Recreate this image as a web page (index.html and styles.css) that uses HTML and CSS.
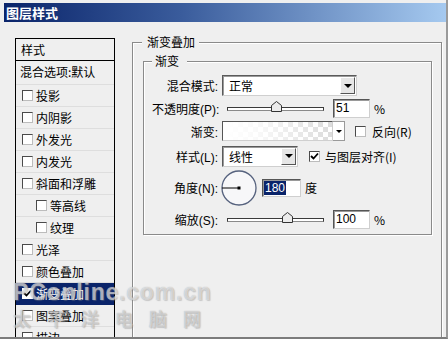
FILE: index.html
```html
<!DOCTYPE html>
<html>
<head>
<meta charset="utf-8">
<link rel="stylesheet" href="styles.css">
</head>
<body>
<div class="win">
  <div class="title">图层样式</div>
  <div class="main">
    <div class="list">
      <div class="hdr">样式</div>
      <div class="blend">混合选项:默认</div>
      <div class="item"><span class="cb"></span>投影</div>
      <div class="item"><span class="cb"></span>内阴影</div>
      <div class="item"><span class="cb"></span>外发光</div>
      <div class="item"><span class="cb"></span>内发光</div>
      <div class="item"><span class="cb"></span>斜面和浮雕</div>
      <div class="item sub"><span class="cb"></span>等高线</div>
      <div class="item sub"><span class="cb"></span>纹理</div>
      <div class="item"><span class="cb"></span>光泽</div>
      <div class="item"><span class="cb"></span>颜色叠加</div>
      <div class="item sel"><span class="cb on"><svg width="9" height="9" viewBox="0 0 9 9"><path d="M1 4 L3.5 6.5 L8 1.5" fill="none" stroke="#000" stroke-width="1.8"/></svg></span>渐变叠加</div>
      <div class="item"><span class="cb"></span>图案叠加</div>
      <div class="item"><span class="cb"></span>描边</div>
    </div>
    <fieldset class="grp outer">
      <legend class="lg-outer">渐变叠加</legend>
      <fieldset class="grp inner">
        <legend class="lg-inner">渐变</legend>
        <div class="row r1">
          <span class="lbl">混合模式:</span>
          <div class="select w-mode"><span class="val">正常</span><span class="btn"><i class="tri"></i></span></div>
        </div>
        <div class="row r2">
          <span class="lbl">不透明度(P):</span>
          <div class="slider"><div class="track"></div><svg class="thumb t51" width="11" height="11" viewBox="0 0 11 11"><polygon points="0.5,10.5 0.5,4.5 5.5,0.5 10.5,4.5 10.5,10.5" fill="#ececec" stroke="#333"/></svg></div>
          <div class="input w-num">51</div>
          <span class="unit">%</span>
        </div>
        <div class="row r3">
          <span class="lbl">渐变:</span>
          <div class="grad"></div>
          <span class="gbtn"><i class="tri small"></i></span>
          <span class="cb c-rev"></span>
          <span class="ctext">反向(R)</span>
        </div>
        <div class="row r4">
          <span class="lbl">样式(L):</span>
          <div class="select w-style"><span class="val">线性</span><span class="btn"><i class="tri"></i></span></div>
          <span class="cb c-align"><svg width="9" height="9" viewBox="0 0 9 9"><path d="M1 4 L3.5 6.5 L8 1.5" fill="none" stroke="#000" stroke-width="1.8"/></svg></span>
          <span class="ctext">与图层对齐(I)</span>
        </div>
        <div class="row r5">
          <span class="lbl">角度(N):</span>
          <svg class="dial" width="36" height="36" viewBox="0 0 36 36"><circle cx="18" cy="18" r="17" fill="#f7f7f9" stroke="#56627e" stroke-width="1.3"/><line x1="1" y1="18" x2="18" y2="18" stroke="#000" stroke-width="1"/><rect x="16.5" y="16.5" width="3" height="3" fill="#000"/></svg>
          <div class="input w-ang"><span class="hl">180</span></div>
          <span class="unit">度</span>
        </div>
        <div class="row r6">
          <span class="lbl">缩放(S):</span>
          <div class="slider"><div class="track"></div><svg class="thumb t100" width="11" height="11" viewBox="0 0 11 11"><polygon points="0.5,10.5 0.5,4.5 5.5,0.5 10.5,4.5 10.5,10.5" fill="#ececec" stroke="#333"/></svg></div>
          <div class="input w-num">100</div>
          <span class="unit">%</span>
        </div>
      </fieldset>
    </fieldset>
  </div>
  <div class="wm">
    <div class="wm1">PConline.com.cn</div>
    <div class="wm2">太平洋电脑网</div>
  </div>
</div>
</body>
</html>
```

FILE: styles.css
```css
* { box-sizing: border-box; }
html, body { margin: 0; padding: 0; background: #efefef; }
body {
  font-family: "Liberation Sans", "Noto Sans CJK SC", sans-serif;
  font-size: 12px;
  color: #000;
}
.win {
  position: relative;
  width: 448px;
  height: 339px;
  overflow: hidden;
  background: #efefef;
  padding: 3px 0 0 4px;
  border-bottom: 2px solid #7c7c7c;
  border-right: 2px solid #9a9a9a;
  border-top: 0;
}
.title {
  height: 19px;
  background: linear-gradient(to right, #0a246a 0%, #3a5c9c 40%, #a6caf0 100%);
  color: #fff;
  font-weight: bold;
  font-size: 13px;
  line-height: 19px;
  padding-left: 2px;
  margin-right: -2px;
  font-family: "Noto Sans CJK SC", sans-serif;
}
.main {
  display: flex;
  align-items: stretch;
  height: 315px;
  padding: 13px 0 0 11px;
}
.list {
  width: 100px;
  margin-top: 3px;
  border: 1px solid #000;
  border-bottom: 0;
  font-family: "Noto Sans CJK SC", sans-serif;
}
.hdr {
  height: 22px;
  line-height: 21px;
  padding-left: 5px;
  border-bottom: 1px solid #000;
}
.blend {
  height: 24px;
  border-top: 2px solid #cfcfcf;
  box-shadow: inset 0 1px 0 #000;
  border-bottom: 1px solid #dedede;
  line-height: 20px;
  padding-left: 4px;
  padding-top: 1px;
}
.hdr + .blend { border-top: 0; box-shadow: none; }
.item {
  height: 22px;
  display: flex;
  align-items: center;
  padding-left: 6px;
  border-bottom: 1px solid #dedede;
}
.item.sub { padding-left: 20px; }
.item.sel { background: #0a246a; color: #fff; border-bottom-color: #0a246a; }
.cb {
  display: inline-flex;
  align-items: center;
  justify-content: center;
  width: 11px;
  height: 11px;
  background: #fff;
  border: 1px solid #4a4a4a;
  border-right-color: #bcbcbc;
  border-bottom-color: #bcbcbc;
  margin-right: 3px;
  flex: none;
}
.cb.on { border-color: #fff; }
.grp {
  margin: 0;
  min-width: 0;
  border: 1px solid #8a8a8a;
  box-shadow: inset 1px 1px 0 #fff, 1px 1px 0 #fff;
}
.outer {
  width: 310px;
  margin-left: 17px;
  padding: 5px 9px 0 10px;
  border-bottom: 0;
}
.lg-outer {
  padding: 0 4px 0 5px;
  margin-left: -1px;
  line-height: 14px;
  font-family: "Noto Sans CJK SC", sans-serif;
  background: #efefef;
}
.inner {
  padding: 6px 0 0 8px;
}
.lg-inner {
  padding: 0 8px 0 3px;
  line-height: 14px;
  font-family: "Noto Sans CJK SC", sans-serif;
  background: #efefef;
}
.row {
  display: flex;
  align-items: center;
}
.r1 { height: 23px; }
.r2 { height: 23px; }
.r3 { height: 22px; }
.r4 { height: 28px; }
.r5 { height: 35px; }
.r6 { height: 29px; }
.lbl {
  width: 66px;
  margin-right: 4px;
  text-align: right;
  white-space: nowrap;
  flex: none;
}
.select {
  display: flex;
  height: 21px;
  background: #fff;
  border: 1px solid #5a5a5a;
  border-right-color: #cfcfcf;
  border-bottom-color: #cfcfcf;
  box-shadow: inset 1px 1px 0 #9a9a9a;
  font-family: "Noto Sans CJK SC", sans-serif;
}
.w-mode { width: 135px; }
.w-style { width: 76px; }
.val { flex: 1; padding-left: 6px; line-height: 19px; }
.btn {
  width: 15px;
  height: 17px;
  margin: 1px 1px 0 0;
  background: #e6e6e6;
  border: 1px solid #fff;
  border-right-color: #555;
  border-bottom-color: #555;
  display: flex;
  align-items: center;
  justify-content: center;
}
.tri {
  width: 0; height: 0;
  border-left: 4px solid transparent;
  border-right: 4px solid transparent;
  border-top: 4px solid #000;
}
.tri.small {
  border-left-width: 3px;
  border-right-width: 3px;
  border-top-width: 3px;
}
.slider {
  position: relative;
  width: 97px;
  height: 12px;
  margin-left: 5px;
  margin-right: 9px;
  display: flex;
  align-items: center;
}
.track {
  width: 97px;
  height: 4px;
  background: #fff;
  border: 1px solid #3a3a3a;
  border-bottom-color: #8a8a8a;
}
.thumb { position: absolute; top: -2px; }
.t51 { left: 44px; }
.t100 { left: 55px; }
.input {
  height: 19px;
  background: #fff;
  border: 1px solid #555;
  border-right-color: #cfcfcf;
  border-bottom-color: #cfcfcf;
  box-shadow: inset 1px 1px 0 #9a9a9a;
  padding-left: 2px;
  line-height: 17px;
  font-size: 12px;
}
.w-num { width: 37px; }
.unit { margin-left: 4px; font-family: "Noto Sans CJK SC", sans-serif; }
.grad {
  width: 111px;
  height: 20px;
  border: 1px solid #555;
  border-right-color: #cfcfcf;
  border-bottom-color: #cfcfcf;
  background-color: #fff;
  background-image:
    linear-gradient(to right, #fff 0%, rgba(255,255,255,0.85) 30%, rgba(255,255,255,0) 100%),
    conic-gradient(#dcdcdc 25%, #fff 0 50%, #dcdcdc 0 75%, #fff 0);
  background-size: 100% 100%, 10px 10px;
}
.gbtn {
  width: 12px;
  height: 20px;
  background: #fff;
  border: 1px solid #9a9a9a;
  border-left: 0;
  display: flex;
  align-items: center;
  justify-content: center;
}
.c-rev { margin-left: 10px; margin-right: 6px; }
.c-align { margin-left: 11px; margin-right: 5px; }
.ctext { font-family: "Noto Sans CJK SC", sans-serif; white-space: nowrap; }
.dial { flex: none; margin-left: -1px; }
.w-ang { width: 39px; height: 18px; margin-left: 5px; padding-left: 1px; line-height: 16px; }
.hl { background: #0a246a; color: #fff; padding: 0 1px; }
.wm {
  position: absolute;
  left: 13px;
  top: 279px;
  pointer-events: none;
  color: rgba(255,255,255,0.55);
  text-shadow: 0 0 1px rgba(110,110,110,0.5), 1px 1px 1px rgba(140,140,140,0.35);
}
.wm1 {
  font-family: "Liberation Sans", sans-serif;
  font-weight: bold;
  font-size: 23px;
  line-height: 26px;
  letter-spacing: 0.8px;
}
.wm2 {
  font-family: "Noto Sans CJK SC", sans-serif;
  font-weight: bold;
  font-size: 18px;
  line-height: 26px;
  letter-spacing: 16px;
  color: rgba(255,255,255,0.45);
}
```
